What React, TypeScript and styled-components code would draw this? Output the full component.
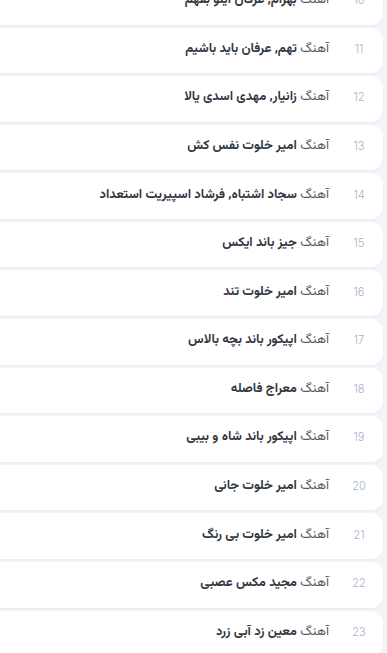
import React from "react";
import styled, { createGlobalStyle } from "styled-components";

const songs = [
  { n: 10, title: "بهرام, عرفان اینو بفهم" },
  { n: 11, title: "تهم, عرفان باید باشیم" },
  { n: 12, title: "زانیار, مهدی اسدی یالا" },
  { n: 13, title: "امیر خلوت نفس کش" },
  { n: 14, title: "سجاد اشتباه, فرشاد اسپیریت استعداد" },
  { n: 15, title: "جیز باند ایکس" },
  { n: 16, title: "امیر خلوت تند" },
  { n: 17, title: "اپیکور باند بچه بالاس" },
  { n: 18, title: "معراج فاصله" },
  { n: 19, title: "اپیکور باند شاه و بیبی" },
  { n: 20, title: "امیر خلوت جانی" },
  { n: 21, title: "امیر خلوت بی رنگ" },
  { n: 22, title: "مجید مکس عصبی" },
  { n: 23, title: "معین زد آبی زرد" },
];

const GlobalStyle = createGlobalStyle`
  html, body {
    margin: 0;
    padding: 0;
    background: #f1f4f8;
    overflow: hidden;
  }
`;

const List = styled.ul`
  direction: rtl;
  list-style: none;
  margin: -21px 4px 0 0;
  padding: 0;
  display: flex;
  flex-direction: column;
  gap: 3px;
`;

const Card = styled.li`
  width: 420px;
  flex-shrink: 0;
  height: 45.58px;
  box-sizing: border-box;
  background: #ffffff;
  border-radius: 12px;
  display: flex;
  align-items: center;
  padding-right: 14px;
  box-shadow: 0 1px 2px rgba(40, 60, 100, 0.04);
`;

const Num = styled.span`
  width: 20px;
  text-align: center;
  font-family: Inter, "Liberation Sans", sans-serif;
  font-size: 11px;
  font-weight: 300;
  color: #a3b2c8;
  margin-left: 20px;
  margin-top: -3px;
`;

const Title = styled.span`
  font-family: "Vazirmatn", "Noto Sans Arabic", "DejaVu Sans", sans-serif;
  font-size: 13px;
  color: #555b66;
  margin-top: -3px;
  white-space: nowrap;
`;

const Name = styled.b`
  font-weight: 700;
  color: #33373f;
`;

export default function App() {
  return (
    <>
      <GlobalStyle />
      <List>
        {songs.map((s) => (
          <Card key={s.n}>
            <Num>{s.n}</Num>
            <Title>
              آهنگ <Name>{s.title}</Name>
            </Title>
          </Card>
        ))}
      </List>
    </>
  );
}
